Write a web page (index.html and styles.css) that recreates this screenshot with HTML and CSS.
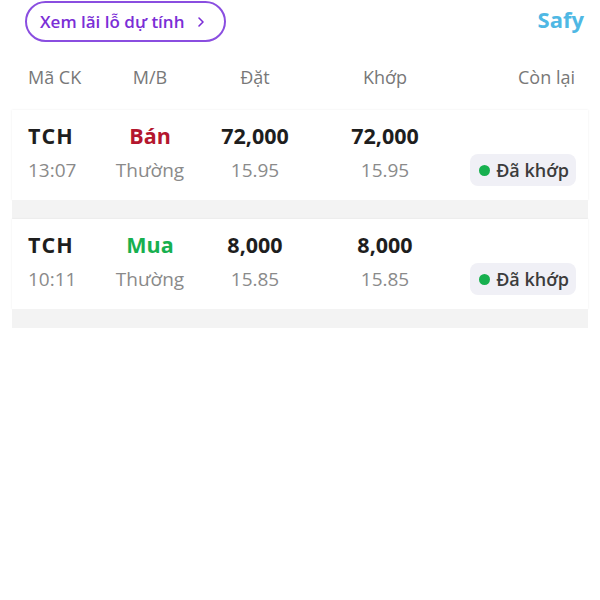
FILE: index.html
```html
<!DOCTYPE html>
<html lang="vi">
<head>
    <meta charset="UTF-8">
    <title>Sổ lệnh</title>
    <link rel="stylesheet" href="styles.css">
</head>
<body>
<div class="topbar">
    <a class="btnReview" href="#">Xem lãi lỗ dự tính
        <svg width="10" height="12" viewBox="0 0 10 12"><path d="M3 2l4 4-4 4" fill="none" stroke="#7b2ed6" stroke-width="1.6" stroke-linecap="round" stroke-linejoin="round"/></svg>
    </a>
    <span class="brand">Safy</span>
</div>
<!--tiêu đề cột-->
<div class="grid head">
    <div>Mã CK</div>
    <div class="c">M/B</div>
    <div class="c">Đặt</div>
    <div class="c">Khớp</div>
    <div class="r">Còn lại</div>
</div>
<!--danh sách lệnh-->
<div class="orders">
    <div class="grid order">
        <div class="code">TCH</div>
        <div class="c side sell">Bán</div>
        <div class="c num">72,000</div>
        <div class="c num">72,000</div>
        <div></div>
        <div class="sub">13:07</div>
        <div class="c sub">Thường</div>
        <div class="c sub">15.95</div>
        <div class="c sub">15.95</div>
        <div class="r"><span class="badge"><i></i>Đã khớp</span></div>
    </div>
    <div class="gap"></div>
    <div class="grid order">
        <div class="code">TCH</div>
        <div class="c side buy">Mua</div>
        <div class="c num">8,000</div>
        <div class="c num">8,000</div>
        <div></div>
        <div class="sub">10:11</div>
        <div class="c sub">Thường</div>
        <div class="c sub">15.85</div>
        <div class="c sub">15.85</div>
        <div class="r"><span class="badge"><i></i>Đã khớp</span></div>
    </div>
    <div class="gap"></div>
</div>
</body>
</html>
```

FILE: styles.css
```css
body{
    margin:0;
    font-family: "Open Sans", "Noto Sans", sans-serif;
    background-color: white;
    color:#222;
}
.topbar{
    display:flex;
    justify-content: space-between;
    align-items: flex-start;
    padding:1px 16px 0 25px;
    height:44px;
    box-sizing: border-box;
}
.btnReview{
    display:flex;
    align-items: center;
    gap:12px;
    height:41px;
    box-sizing: border-box;
    padding:0 18px 0 13px;
    border:2px solid #8a4ee0;
    border-radius: 21px;
    color:#7b2ed6;
    font-size: 17px;
    font-weight: 600;
    text-decoration: none;
}
.brand{
    color:#4fb8e4;
    font-size: 22px;
    font-weight: bold;
    margin-top:3px;
}
.grid{
    display:grid;
    grid-template-columns: 72px 100px 110px 150px 115px;
    padding:0 13px 0 16px;
}
.c{ text-align: center; }
.r{ text-align: right; }
.head{
    margin:0 12px;
    height:66px;
    box-sizing: border-box;
    padding-top:20px;
    color:#787878;
    font-size: 18px;
    line-height: 26px;
}
.orders{
    margin:0 12px;
}
.order{
    background-color: white;
    box-shadow: 0 0 2px rgba(0,0,0,.08);
    height:90px;
    box-sizing: border-box;
    padding-top:12px;
    grid-template-rows: 28px 28px;
    row-gap:6px;
    align-content: start;
    align-items: center;
}
.code, .num, .side{
    font-size: 21.5px;
    font-weight: bold;
    line-height: 28px;
}
.code{ color:#1e1e1e; letter-spacing: 1px; }
.num{ color:#1e1e1e; }
.sell{ color:#b4172e; }
.buy{ color:#17b04f; }
.sub{
    color:#8a8a8a;
    font-size: 19px;
    line-height: 28px;
}
.badge{
    display:inline-flex;
    align-items: center;
    gap:6px;
    background-color: #f0f0f6;
    border-radius: 8px;
    height:32px;
    box-sizing: border-box;
    padding:0 7px 0 9px;
    color:#3c3c3c;
    font-size: 18px;
    font-weight: 600;
    margin-right:-1px;
}
.badge i{
    width:11px;
    height:11px;
    border-radius: 50%;
    background-color: #17b04f;
}
.gap{
    height:19px;
    background-color: #f3f3f3;
}
```
